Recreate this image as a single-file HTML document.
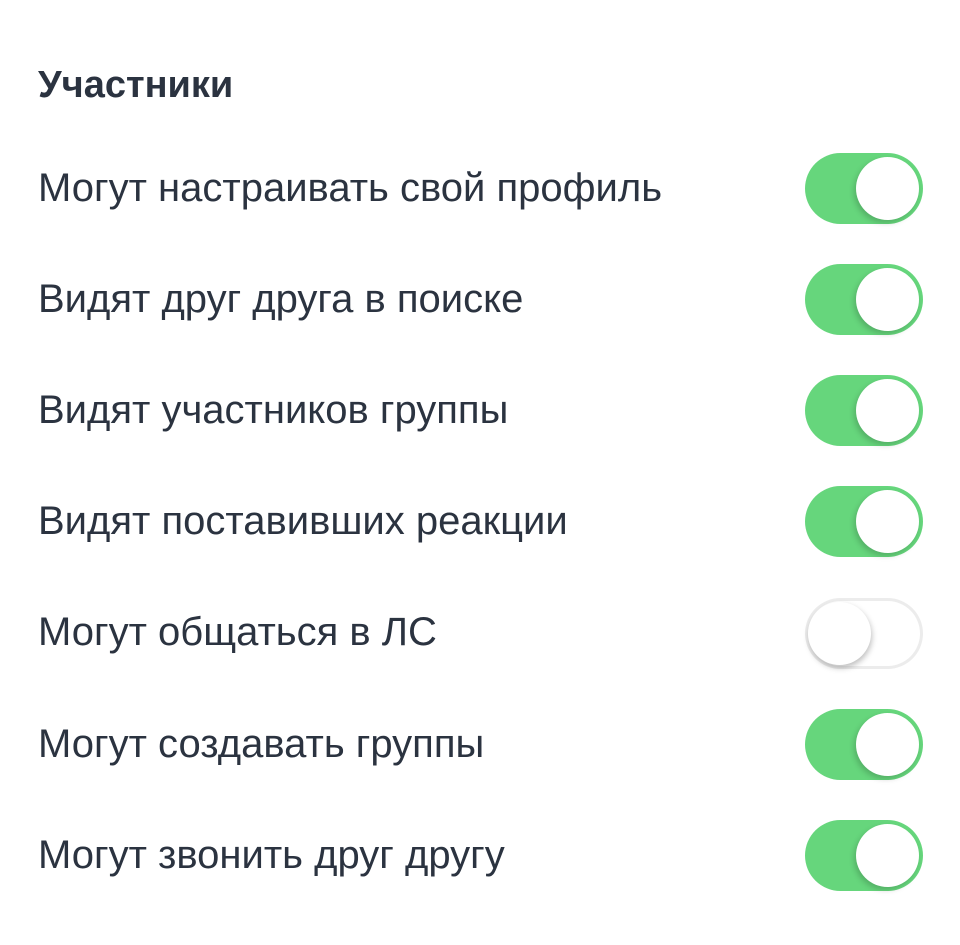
<!DOCTYPE html>
<html><head><meta charset="utf-8"><style>
html,body{margin:0;padding:0;background:#fff;width:960px;height:945px;overflow:hidden}
body{font-family:"Liberation Sans","DejaVu Sans",sans-serif;color:#2b3340;position:relative}
.h{position:absolute;left:38px;top:64px;font-size:38px;font-weight:bold}
.r{position:absolute;left:38px;font-size:40px;line-height:40px}
.t{position:absolute;left:805px;width:118px;height:71px;border-radius:36px;background:#66d67c}
.t::after{content:"";position:absolute;right:4px;top:4px;width:63px;height:63px;border-radius:50%;background:#fff;box-shadow:-2px 3px 6px rgba(0,0,0,.18)}
.t.off{background:#fff;box-shadow:inset 0 0 0 3px #ececec}
.t.off::after{left:3px;right:auto;box-shadow:1px 3px 6px rgba(0,0,0,.25)}
</style></head><body>
<div class="h">Участники</div>
<div class="r" style="top:168px">Могут настраивать свой профиль</div><div class="t" style="top:153px"></div>
<div class="r" style="top:279px">Видят друг друга в поиске</div><div class="t" style="top:264px"></div>
<div class="r" style="top:390px">Видят участников группы</div><div class="t" style="top:375px"></div>
<div class="r" style="top:501px">Видят поставивших реакции</div><div class="t" style="top:486px"></div>
<div class="r" style="top:612px">Могут общаться в ЛС</div><div class="t off" style="top:598px"></div>
<div class="r" style="top:724px">Могут создавать группы</div><div class="t" style="top:709px"></div>
<div class="r" style="top:835px">Могут звонить друг другу</div><div class="t" style="top:820px"></div>
</body></html>
